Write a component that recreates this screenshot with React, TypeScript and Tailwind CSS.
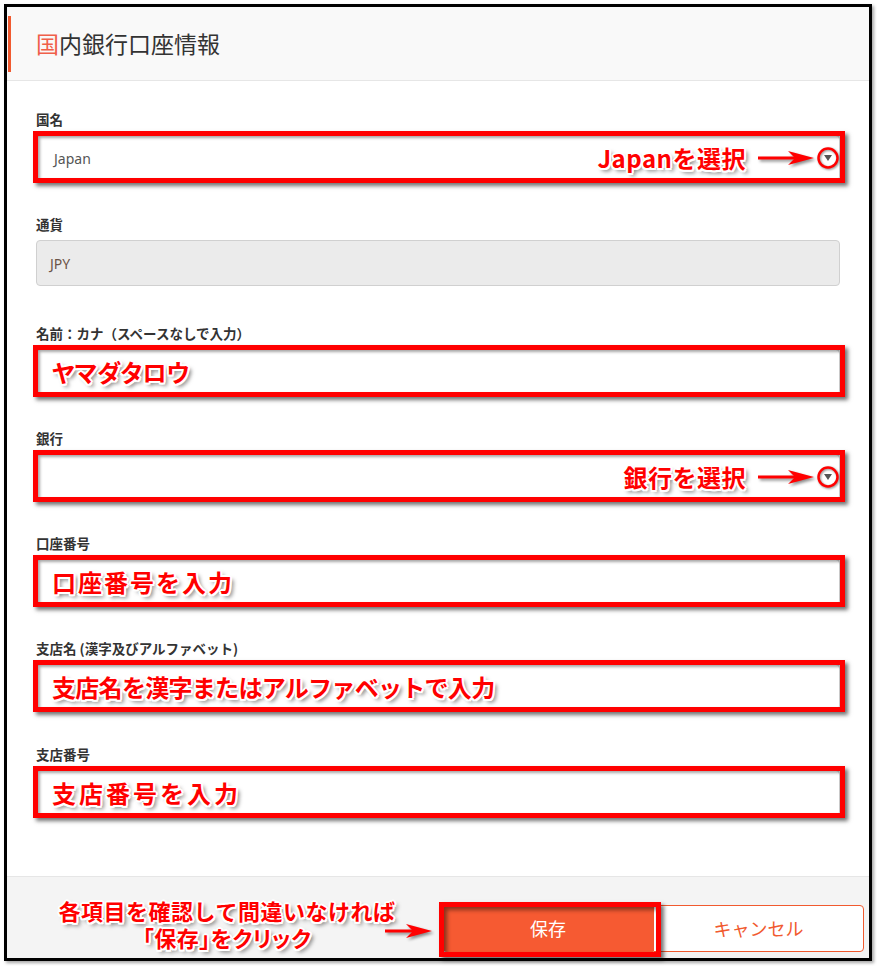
import React from 'react';

const jp = "[font-family:'Noto_Sans_CJK_JP','Noto_Sans',sans-serif]";
const anno =
  "font-bold text-[#ff0000] [text-shadow:2px_0_0_#fff,-2px_0_0_#fff,0_2px_0_#fff,0_-2px_0_#fff,1.5px_1.5px_0_#fff,-1.5px_-1.5px_0_#fff,1.5px_-1.5px_0_#fff,-1.5px_1.5px_0_#fff,3px_3px_4px_rgba(0,0,0,0.6)]";

function Arrow({ w = 56 }: { w?: number }) {
  return (
    <svg width={w} height="16" viewBox={`0 0 ${w} 16`} className="drop-shadow-[2px_2px_1.5px_rgba(0,0,0,0.45)]">
      <rect x="0" y="6.5" width={w - 18} height="3" fill="#ff0000" />
      <path d={`M${w - 26} 1 L${w} 8 L${w - 26} 15 L${w - 19} 8 Z`} fill="#ff0000" />
    </svg>
  );
}

function Caret() {
  return (
    <div className="relative flex h-[22px] w-[22px] items-center justify-center">
      <div className="h-0 w-0 border-x-[4px] border-t-[6px] border-x-transparent border-t-[#555]" />
      <svg width="22" height="22" viewBox="0 0 22 22" className="absolute inset-0 drop-shadow-[1px_1px_1px_rgba(0,0,0,0.45)]">
        <circle cx="11" cy="11" r="9.5" fill="none" stroke="#ff0000" strokeWidth="2.5" />
      </svg>
    </div>
  );
}

function RedBox() {
  return (
    <span className="pointer-events-none absolute -top-[5px] -left-[4px] -right-[6px] -bottom-[3px] border-[5px] border-[#ff0000] shadow-[3px_3px_4px_rgba(0,0,0,0.55),inset_2px_2px_3px_rgba(0,0,0,0.35)]" />
  );
}

function Label({ children }: { children: React.ReactNode }) {
  return <div className="mb-[7px] h-[18px] text-[13.5px] leading-[18px] font-bold text-[#333]">{children}</div>;
}

function TextField({ label, note, className, mb }: { label: string; note: string; className: string; mb: string }) {
  return (
    <div className={mb}>
      <Label>{label}</Label>
      <div className="relative flex h-[46px] items-center rounded border border-[#ccc] bg-white pl-[15px]">
        <span className={`${anno} ${className}`}>{note}</span>
        <RedBox />
      </div>
    </div>
  );
}

function SelectField({ label, value, note, mb }: { label: string; value: string; note: string; mb: string }) {
  return (
    <div className={mb}>
      <Label>{label}</Label>
      <div className="relative flex h-[46px] items-center justify-between rounded border border-[#ccc] bg-white pl-[17px]">
        <span className="text-[14px] text-[#555] [font-family:'Noto_Sans',sans-serif]">{value}</span>
        <div className="flex items-center">
          <span className={`${anno} text-[24px] leading-none tracking-[0.5px]`}>{note}</span>
          <div className="ml-[12px] mr-[3px]">
            <Arrow />
          </div>
          <Caret />
        </div>
        <RedBox />
      </div>
    </div>
  );
}

export default function App() {
  return (
    <div className={`h-[966px] w-[877px] bg-white pt-1 pl-1 ${jp}`}>
      <div className="flex h-[957px] w-[868px] flex-col border-[3px] border-black shadow-[2px_2px_3px_rgba(0,0,0,0.35)]">
        <header className="relative flex h-[74px] items-center border-b border-[#e6e6e6] bg-[#f9f9f9] pl-[29px]">
          <span className="absolute left-[1px] top-[9px] h-[56px] w-[3px] bg-[#f15a2f]" />
          <h1 className="text-[23px] font-normal leading-none text-[#333]">
            <span className="text-[#f0604a]">国</span>内銀行口座情報
          </h1>
        </header>

        <main className="flex-1 px-[29px] pt-[29px]">
          <SelectField label="国名" value="Japan" note="Japanを選択" mb="mb-[34px]" />

          <div className="mb-[38px]">
            <Label>通貨</Label>
            <div className="flex h-[46px] items-center rounded border border-[#d0d0d0] bg-[#ebebeb] pl-[13px] text-[14px] text-[#6b5448] [font-family:'Noto_Sans',sans-serif]">
              JPY
            </div>
          </div>

          <TextField
            label="名前：カナ（スペースなしで入力）"
            note="ヤマダタロウ"
            className="text-[24px] leading-none [font-feature-settings:'palt']"
            mb="mb-[34px]"
          />

          <SelectField label="銀行" value="" note="銀行を選択" mb="mb-[34px]" />

          <TextField label="口座番号" note="口座番号を入力" className="text-[24px] leading-none tracking-[2px]" mb="mb-[34px]" />

          <TextField
            label="支店名 (漢字及びアルファベット)"
            note="支店名を漢字またはアルファベットで入力"
            className="text-[24px] leading-none tracking-[-0.7px]"
            mb="mb-[35px]"
          />

          <TextField label="支店番号" note="支店番号を入力" className="text-[24px] leading-none tracking-[3px]" mb="mb-0" />
        </main>

        <footer className="relative flex h-[82px] justify-end border-t border-[#e6e6e6] bg-[#f4f4f4] pr-[5px] pt-[28px]">
          <div className={`absolute left-[30px] top-[20px] w-[380px] text-center text-[22px] leading-[27px] tracking-[0.5px] ${anno}`}>
            <div>各項目を確認して間違いなければ</div>
            <div className="[font-feature-settings:'palt']">「保存」をクリック</div>
          </div>
          <div className="absolute left-[378px] top-[46px]">
            <Arrow w={47} />
          </div>

          <div className="flex h-[47px]">
            <button className="relative w-[210px] rounded-l bg-[#f65a32] text-[18px] text-white">
              保存
              <span className="pointer-events-none absolute -top-[3px] -left-[4px] -right-[8px] -bottom-[5px] border-[5px] border-[#ff0000] shadow-[3px_3px_4px_rgba(0,0,0,0.55),inset_3px_3px_4px_rgba(0,0,0,0.45)]" />
            </button>
            <button className="w-[211px] rounded-r border border-[#f15a2f] bg-white text-[18px] text-[#f15a2f]">キャンセル</button>
          </div>
        </footer>
      </div>
    </div>
  );
}
